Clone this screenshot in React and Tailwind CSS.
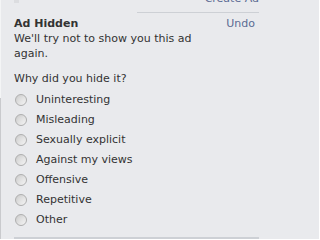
const REASONS = [
  'Uninteresting',
  'Misleading',
  'Sexually explicit',
  'Against my views',
  'Offensive',
  'Repetitive',
  'Other',
]

function Radio() {
  return (
    <span className="w-[12px] h-[12px] rounded-full border border-[#aeaeae] bg-gradient-to-br from-[#cbcbcb] to-[#f5f5f5] flex items-center justify-center shrink-0">
      <span className="w-[6px] h-[6px] rounded-full bg-gradient-to-br from-[#d6d6d6] to-[#eeeeee]" />
    </span>
  )
}

export default function App() {
  return (
    <div
      className="w-[319px] h-[239px] overflow-hidden bg-[#e9eaed] flex text-[11px] text-[#333]"
      style={{ fontFamily: '"DejaVu Sans", Tahoma, sans-serif' }}
    >
      {/* left edge */}
      <div className="w-px flex flex-col shrink-0">
        <div className="h-[98px] bg-[#f4f5f6]" />
        <div className="flex-1 bg-[#c9cacd]" />
      </div>

      <div className="pl-[13px] w-[258px]">
        <div className="relative h-[12px]">
          <div className="w-[5px] h-[3px] bg-[#dcdde0]" />
          <div className="absolute right-0 top-[-8px] leading-[14px] text-[#5b6b93]">Create Ad</div>
        </div>
        <div className="ml-[123px] h-px bg-[#cdd0d5]" />

        <div className="mt-[4px] flex justify-between items-start pr-[4px]">
          <div className="w-[200px]">
            <div className="font-bold leading-[14px]">Ad Hidden</div>
            <div className="leading-[15px]">We'll try not to show you this ad again.</div>
          </div>
          <div className="leading-[14px] text-[#5b6b93]">Undo</div>
        </div>

        <div className="mt-[11px] leading-[14px]">Why did you hide it?</div>

        <div className="mt-[4px] flex flex-col">
          {REASONS.map((r) => (
            <label key={r} className="h-[20px] flex items-center gap-[9px] pl-[1px]">
              <Radio />
              <span className="leading-[14px]">{r}</span>
            </label>
          ))}
        </div>

        <div className="mt-[7px] h-[2px] bg-[#cdd0d5]" />
      </div>
    </div>
  )
}
